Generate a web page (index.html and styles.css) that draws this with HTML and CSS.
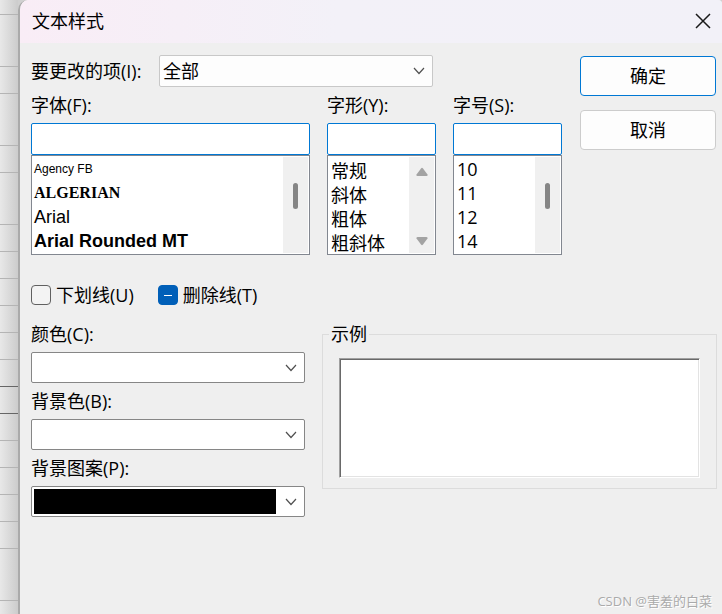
FILE: index.html
```html
<!DOCTYPE html>
<html lang="zh-CN">
<head>
    <meta charset="UTF-8">
    <meta name="viewport" content="width=device-width, initial-scale=1.0">
    <title>文本样式</title>
    <link rel="stylesheet" href="styles.css">
</head>
<body>
    <!-- 背后的表格 -->
    <div class="sheet">
        <div class="row first"></div>
        <div class="row tall"></div>
        <div class="row"></div>
        <div class="row tall"></div>
        <div class="row"></div>
        <div class="row tall"></div>
        <div class="row"></div>
        <div class="row"></div>
        <div class="row"></div>
        <div class="row"></div>
        <div class="row"></div>
        <div class="row dark"></div>
        <div class="row dark"></div>
        <div class="row"></div>
        <div class="row"></div>
        <div class="row"></div>
        <div class="row"></div>
        <div class="row"></div>
        <div class="row tall"></div>
    </div>

    <div class="dialog">
        <div class="titlebar">
            <h1>文本样式</h1>
            <button class="close" aria-label="关闭">
                <svg width="16" height="16" viewBox="0 0 16 16"><path d="M1 1L15 15M15 1L1 15" fill="none" stroke="#1a1a1a" stroke-width="1.5"/></svg>
            </button>
        </div>

        <form class="content" onsubmit="return false">
            <div class="top">
                <div class="fields">
                    <div class="item-row">
                        <label for="item">要更改的项(I):</label>
                        <div class="combo light">
                            <select id="item"><option>全部</option></select>
                            <svg width="12" height="8" viewBox="0 0 12 8"><path d="M1 1L6 6.500L11 1"/></svg>
                        </div>
                    </div>

                    <div class="lists">
                        <div class="col wide">
                            <label for="font">字体(F):</label>
                            <input type="text" id="font">
                            <div class="listbox">
                                <select size="4" aria-label="字体列表">
                                    <option class="agency">Agency FB</option>
                                    <option class="algerian">ALGERIAN</option>
                                    <option class="arial">Arial</option>
                                    <option class="rounded">Arial Rounded MT</option>
                                </select>
                                <div class="scroll"><span class="thumb"></span></div>
                            </div>
                        </div>
                        <div class="col">
                            <label for="style">字形(Y):</label>
                            <input type="text" id="style">
                            <div class="listbox">
                                <select size="4" aria-label="字形列表">
                                    <option>常规</option>
                                    <option>斜体</option>
                                    <option>粗体</option>
                                    <option>粗斜体</option>
                                </select>
                                <div class="scroll arrows">
                                    <svg width="12" height="10" viewBox="0 0 12 10"><path d="M5 1.500Q6 .2 7 1.500L11.500 7.500Q12 9 10.500 9H1.500Q0 9 .5 7.500Z"/></svg>
                                    <svg width="12" height="10" viewBox="0 0 12 10"><path d="M5 8.500Q6 9.800 7 8.500L11.500 2.500Q12 1 10.500 1H1.500Q0 1 .5 2.500Z"/></svg>
                                </div>
                            </div>
                        </div>
                        <div class="col">
                            <label for="size">字号(S):</label>
                            <input type="text" id="size">
                            <div class="listbox">
                                <select size="4" aria-label="字号列表">
                                    <option>10</option>
                                    <option>11</option>
                                    <option>12</option>
                                    <option>14</option>
                                </select>
                                <div class="scroll"><span class="thumb"></span></div>
                            </div>
                        </div>
                    </div>
                </div>

                <div class="buttons">
                    <button class="btn primary">确定</button>
                    <button class="btn">取消</button>
                </div>
            </div>

            <div class="checks">
                <label><input type="checkbox" id="underline">下划线(U)</label>
                <label><input type="checkbox" id="strike">删除线(T)</label>
            </div>

            <div class="bottom">
                <div class="colors">
                    <label for="color">颜色(C):</label>
                    <div class="combo">
                        <select id="color"></select>
                        <svg width="12" height="8" viewBox="0 0 12 8"><path d="M1 1L6 6.500L11 1"/></svg>
                    </div>
                    <label for="bg">背景色(B):</label>
                    <div class="combo">
                        <select id="bg"></select>
                        <svg width="12" height="8" viewBox="0 0 12 8"><path d="M1 1L6 6.500L11 1"/></svg>
                    </div>
                    <label for="pattern">背景图案(P):</label>
                    <div class="combo">
                        <select id="pattern" class="filled"></select>
                        <svg width="12" height="8" viewBox="0 0 12 8"><path d="M1 1L6 6.500L11 1"/></svg>
                    </div>
                </div>

                <fieldset>
                    <legend>示例</legend>
                    <div class="preview"></div>
                </fieldset>
            </div>
        </form>

        <div class="watermark">CSDN @害羞的白菜</div>
    </div>

    <script>
        // 删除线为混合状态
        document.getElementById('strike').indeterminate = true;
    </script>
</body>
</html>
```
FILE: styles.css
```css
* {
    box-sizing: border-box;
}
body {
    margin: 0;
    min-height: 100vh;
    display: flex;
    background-color: #d0d0d0;
    font-family: "Open Sans", "Noto Sans CJK SC", sans-serif;
    font-size: 18px;
    line-height: 24px;
    color: #000;
    overflow: hidden;
}
input, select, button {
    font: inherit;
    color: inherit;
    margin: 0;
}

/* 表格 */
.sheet {
    width: 18px;
    flex: none;
    background: linear-gradient(to right, #e8e8e8, #cccccc);
}
.row {
    height: 27px;
    border-bottom: 1px solid #b4b4b4;
}
.row.first {
    height: 15px;
}
.row.tall {
    height: 52px;
}
.row.dark {
    border-color: #666;
}

/* 对话框 */
.dialog {
    flex: 1;
    position: relative;
    border-left: 2px solid #aaa;
    border-radius: 10px 4px 0 0;
    background-color: #efefef;
    overflow: hidden;
}
.titlebar {
    height: 43px;
    padding: 0 11px 2px 12px;
    display: flex;
    align-items: center;
    justify-content: space-between;
    background: linear-gradient(to right, #f9edf6, #f3f1f8 45%, #f2f1f8);
}
h1 {
    margin: 0;
    font-size: 18px;
    font-weight: normal;
}
.close {
    border: none;
    background: none;
    padding: 0;
    display: flex;
}
.content {
    padding: 12px 5px 0 11px;
}
.top {
    display: flex;
    justify-content: space-between;
}
.fields {
    flex: 1;
    max-width: 531px;
}
.item-row {
    display: flex;
    align-items: center;
    gap: 16px;
}
.item-row .combo {
    width: 274px;
    margin-left: auto;
    margin-right: 129px;
}

/* 下拉框 */
.combo {
    position: relative;
}
.combo select {
    appearance: none;
    display: block;
    width: 100%;
    height: 31px;
    padding: 0 3px;
    border: 1px solid #868686;
    border-radius: 2px;
    background-color: #fff;
}
.combo.light select {
    height: 32px;
    border-color: #c8c8c8;
    background-color: #fdfdfd;
}
.combo svg {
    position: absolute;
    right: 8px;
    top: 12px;
    fill: none;
    stroke: #505050;
    stroke-width: 1.2;
    pointer-events: none;
}
.combo select.filled {
    padding: 2px 28px 2px 2px;
    background: linear-gradient(#000, #000) content-box no-repeat, linear-gradient(#fff, #fff) border-box;
}

/* 列表 */
.lists {
    display: flex;
    gap: 17px;
    margin-top: 6px;
}
.col {
    flex: 0 0 109px;
    display: flex;
    flex-direction: column;
}
.col.wide {
    flex: 1;
}
.col label {
    margin-bottom: 6px;
}
.col input {
    width: 100%;
    height: 32px;
    border: 1px solid #0078d4;
    border-radius: 2px;
    background-color: #fff;
}
.listbox {
    display: flex;
    height: 100px;
    padding: 1px;
    border: 1px solid #828790;
    background-color: #fff;
}
.listbox select {
    flex: 1;
    min-width: 0;
    height: 96px;
    padding: 0;
    border: none;
    outline: none;
    background: none;
    overflow: hidden;
}
.listbox option {
    height: 24px;
    min-height: 24px;
    padding: 0 2px;
}
.listbox option.agency {
    padding: 5px 1px 0;
    font-family: "Liberation Sans Narrow", "Liberation Sans", sans-serif;
    font-size: 12px;
}
.listbox option.algerian {
    padding: 3px 1px 0;
    font-family: "Liberation Serif", serif;
    font-size: 16px;
    font-weight: bold;
}
.listbox option.arial {
    padding: 2px 1px 0;
    font-family: "Liberation Sans", sans-serif;
}
.listbox option.rounded {
    padding: 2px 1px 0;
    font-family: "Liberation Sans", sans-serif;
    font-weight: bold;
}
.scroll {
    width: 25px;
    display: flex;
    flex-direction: column;
    align-items: center;
    background-color: #f0f0f0;
}
.thumb {
    width: 5px;
    height: 26px;
    margin-top: 26px;
    border-radius: 3px;
    background-color: #858585;
}
.arrows {
    justify-content: space-between;
    padding: 10px 0 7px;
}
.arrows svg {
    fill: #a3a3a3;
}

/* 按钮 */
.buttons {
    width: 136px;
    margin: 1px 1px 0 0;
    display: flex;
    flex-direction: column;
    gap: 14px;
}
.btn {
    height: 40px;
    border: 1px solid #ccc;
    border-radius: 4px;
    background-color: #fdfdfd;
}
.btn.primary {
    border-color: #0078d4;
}

/* 复选框 */
.checks {
    display: flex;
    gap: 24px;
    margin-top: 28px;
}
.checks label {
    display: flex;
    align-items: center;
    gap: 5px;
}
.checks input {
    appearance: none;
    width: 20px;
    height: 20px;
    border: 1px solid #606060;
    border-radius: 4px;
    background-color: #f3f3f3;
    display: grid;
    place-items: center;
}
.checks input:indeterminate {
    border-color: #005fb8;
    background-color: #005fb8;
}
.checks input:indeterminate::before {
    content: "";
    width: 8px;
    height: 1px;
    background-color: #fff;
}

/* 颜色和示例 */
.bottom {
    display: flex;
    gap: 17px;
    margin-top: 15px;
}
.colors {
    flex: 0 0 274px;
}
.colors label {
    display: block;
    margin-bottom: 6px;
}
.colors .combo {
    margin-bottom: 6px;
}
fieldset {
    flex: 1;
    min-width: 0;
    height: 167px;
    margin: 0;
    padding: 12px 16px 10px;
    border: 1px solid #dcdcdc;
}
legend {
    margin-left: -10px;
    padding: 0 2px;
}
.preview {
    height: 120px;
    border: 1px solid;
    border-color: #a0a0a0 #fff #fff #a0a0a0;
    background-color: #fff;
    box-shadow: inset 1px 1px 0 #696969, inset -1px -1px 0 #e3e3e3;
}

.watermark {
    position: absolute;
    right: 10px;
    bottom: 3px;
    font-size: 13px;
    line-height: 20px;
    color: #aaa;
    text-shadow: 1px 1px 0 #fff;
}
```
